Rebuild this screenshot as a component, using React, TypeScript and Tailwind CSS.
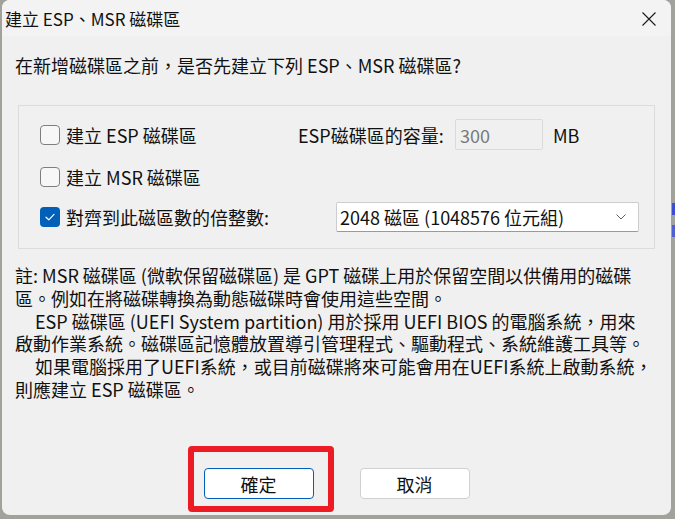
import React from "react";

function Checkbox({ checked }: { checked?: boolean }) {
  if (checked) {
    return (
      <div className="w-[20px] h-[20px] rounded-[4px] bg-[#005fb8] flex items-center justify-center shrink-0">
        <svg width="12" height="10" viewBox="0 0 12 10">
          <path d="M2 5.2 L4.8 7.8 L10 2.4" fill="none" stroke="white" strokeWidth="1.2" strokeLinecap="round" strokeLinejoin="round" />
        </svg>
      </div>
    );
  }
  return <div className="w-[20px] h-[20px] rounded-[4px] border border-[#7f7f7f] bg-[#f7f7f7] shrink-0" />;
}

export default function App() {
  return (
    <div className="w-[675px] h-[519px] bg-[#a2a29c] font-[family-name:'Noto_Sans_CJK_TC','Noto_Sans',sans-serif] text-[#111] relative overflow-hidden">
      <div className="absolute right-0 top-[203px] w-[3px] h-[12px] bg-[#3a4fd0]" />
      <div className="absolute right-0 top-[225px] w-[3px] h-[12px] bg-[#5060d0]" />
      <div className="ml-[2px] mr-[4px] h-[515px] rounded-[8px] bg-[#f0f0f0] overflow-hidden flex flex-col">
        {/* title bar */}
        <div className="h-[36px] bg-[#f3f3f3] flex items-center justify-between pl-[3px] pr-[15px] shrink-0">
          <span className="text-[17px] leading-[20px] mt-[1px]">建立 ESP、MSR 磁碟區</span>
          <svg width="14" height="14" viewBox="0 0 14 14" className="mt-[1px]">
            <path d="M0.5 0.5 L13.5 13.5 M13.5 0.5 L0.5 13.5" stroke="#1a1a1a" strokeWidth="1.1" />
          </svg>
        </div>
        {/* body */}
        <div className="flex flex-col px-[16px]">
          <div className="mt-[17px] text-[18px] leading-[24px] -ml-[3px]">在新增磁碟區之前，是否先建立下列 ESP、MSR 磁碟區?</div>
          {/* group box */}
          <div className="mt-[28px] border border-[#dcdcdc] h-[144px] pt-[13px] pl-[21px] pr-[15px] flex flex-col text-[18px]">
            <div className="h-[31px] flex items-center">
              <Checkbox />
              <span className="ml-[6px] leading-[24px] w-[232px]">建立 ESP 磁碟區</span>
              <span className="leading-[24px] w-[157px]">ESP磁碟區的容量:</span>
              <div className="w-[88px] h-[31px] border border-[#dadada] rounded-[2px] flex items-center pl-[4px] text-[#7a7a7a] leading-[24px]">300</div>
              <span className="ml-[10px] leading-[24px]">MB</span>
            </div>
            <div className="h-[20px] mt-[17px] flex items-center">
              <Checkbox />
              <span className="ml-[6px] leading-[24px]">建立 MSR 磁碟區</span>
            </div>
            <div className="h-[30px] mt-[15px] flex items-center">
              <Checkbox checked />
              <span className="ml-[6px] leading-[24px] w-[271px]">對齊到此磁區數的倍整數:</span>
              <div className="w-[304px] h-[30px] bg-white border border-[#cdcdcd] border-b-[#9a9a9a] rounded-[2px] flex items-center justify-between pl-[3px] pr-[12px]">
                <span className="leading-[24px]">2048 磁區 (1048576 位元組)</span>
                <svg width="10" height="6" viewBox="0 0 10 6">
                  <path d="M0.5 0.5 L5 5 L9.5 0.5" fill="none" stroke="#606060" strokeWidth="1" />
                </svg>
              </div>
            </div>
          </div>
          {/* note */}
          <div className="mt-[15px] -ml-[3px] text-[18px] leading-[22.8px]">
            <div>註: MSR 磁碟區 (微軟保留磁碟區) 是 GPT 磁碟上用於保留空間以供備用的磁碟</div>
            <div>區。例如在將磁碟轉換為動態磁碟時會使用這些空間。</div>
            <div className="pl-[20px]">ESP 磁碟區 (UEFI System partition) 用於採用 UEFI BIOS 的電腦系統，用來</div>
            <div>啟動作業系統。磁碟區記憶體放置導引管理程式、驅動程式、系統維護工具等。</div>
            <div className="pl-[20px]">如果電腦採用了UEFI系統，或目前磁碟將來可能會用在UEFI系統上啟動系統，</div>
            <div>則應建立 ESP 磁碟區。</div>
          </div>
        </div>
        {/* buttons */}
        <div className="mt-auto mb-[16px] flex justify-center gap-[46px] relative">
          <div className="relative">
            <div className="w-[110px] h-[31px] bg-white border border-[#005fb8] rounded-[4px] flex items-center justify-center text-[18px] leading-[24px]">確定</div>
            <div className="absolute left-[-16px] top-[-22px] w-[146px] h-[66px] border-[6px] border-[#ed1c24] rounded-[4px]" />
          </div>
          <div className="w-[110px] h-[31px] bg-white border border-[#d0d0d0] rounded-[4px] flex items-center justify-center text-[18px] leading-[24px]">取消</div>
        </div>
      </div>
    </div>
  );
}
